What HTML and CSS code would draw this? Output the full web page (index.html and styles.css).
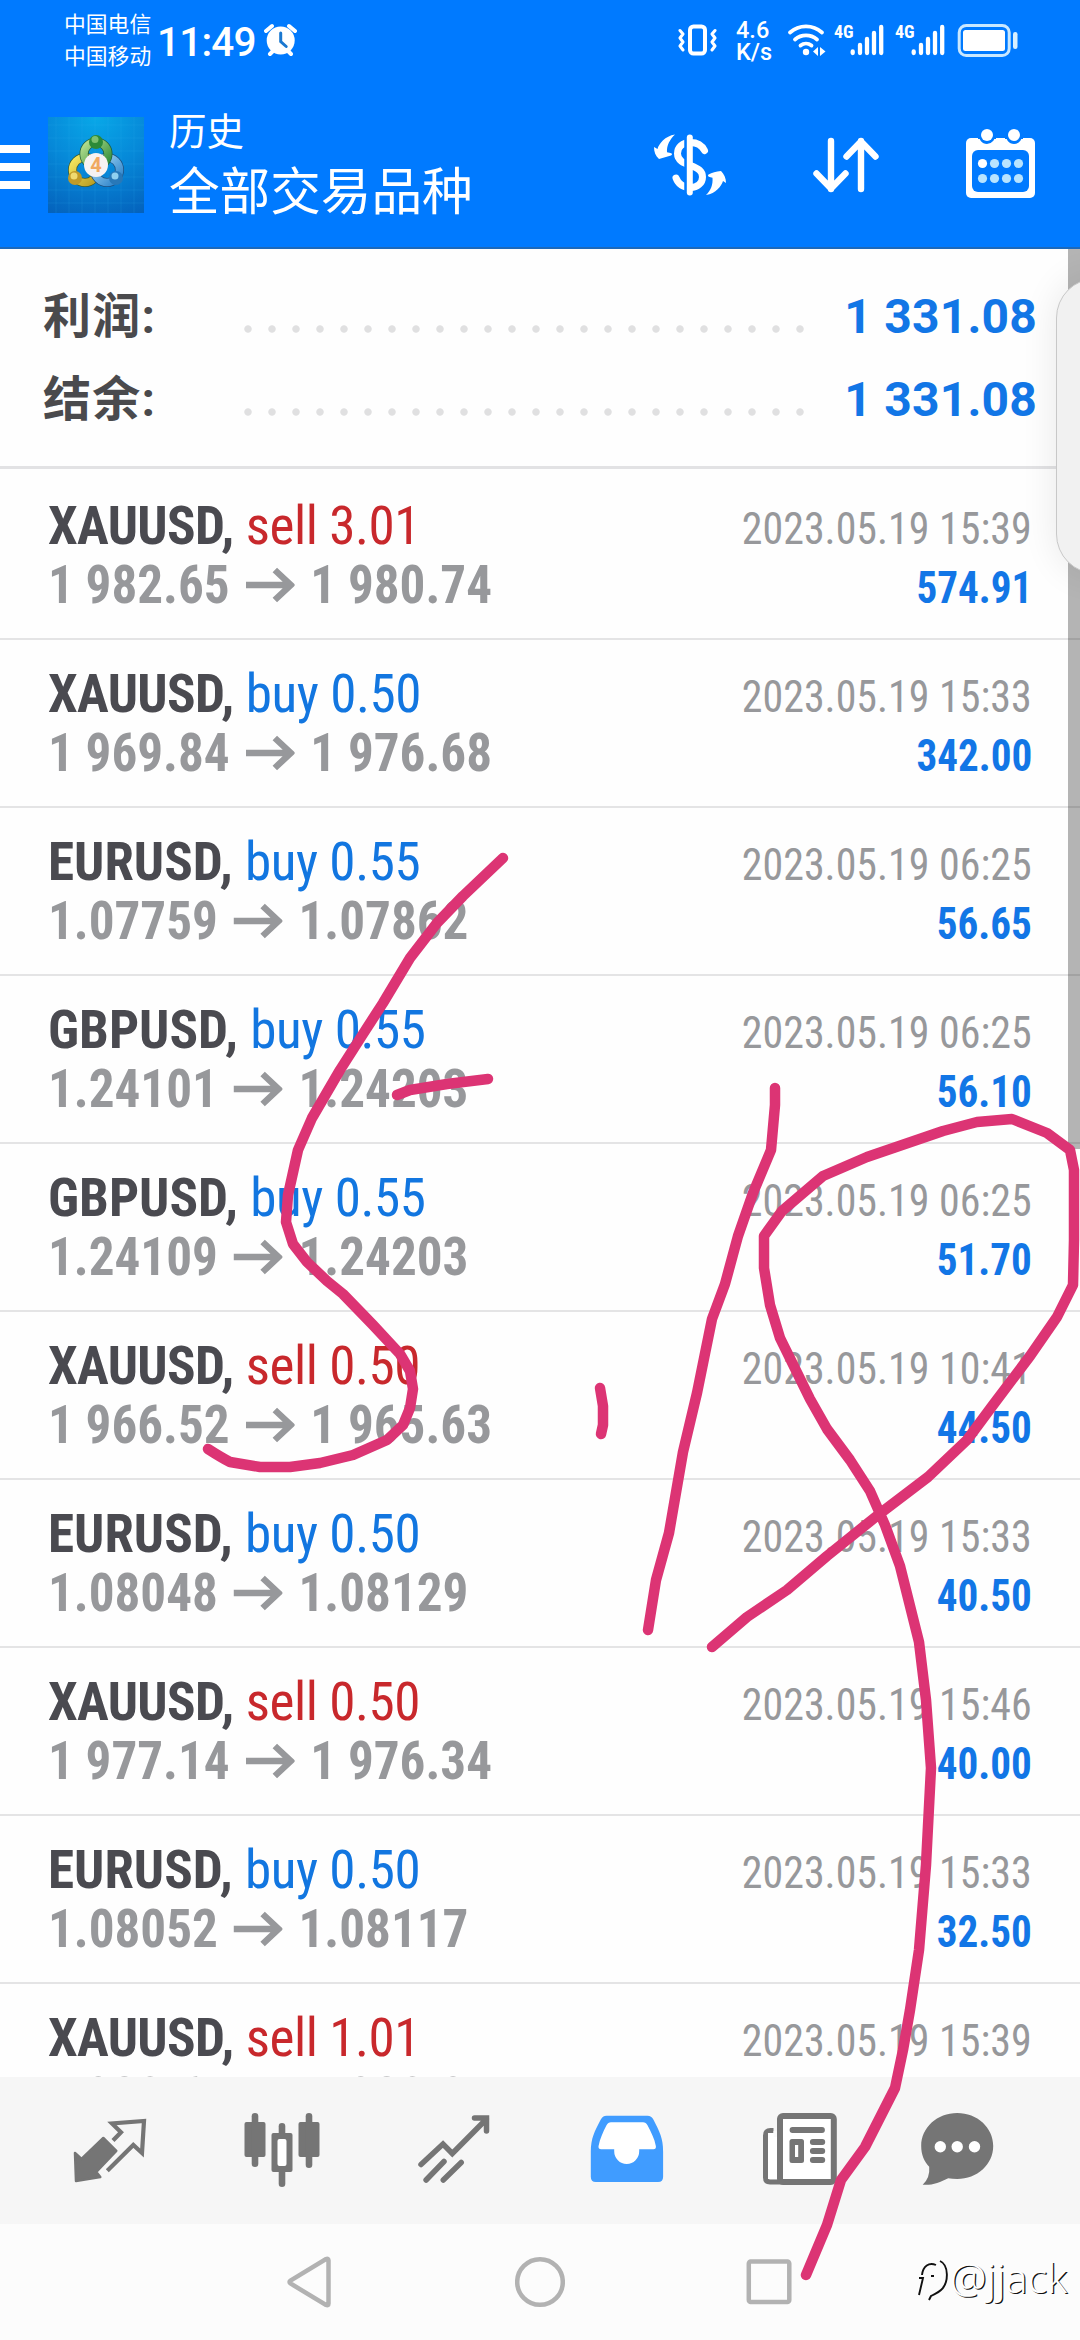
FILE: index.html
```html
<!DOCTYPE html>
<html lang="zh-CN">
<head>
<meta charset="utf-8">
<title>历史</title>
<link rel="stylesheet" href="styles.css">
</head>
<body>
<div class="screen">
  <header class="top">
    <div class="status">
      <div class="carriers"><span>中国电信</span><span>中国移动</span></div>
      <div class="clock">11:49</div>
      <svg class="alarm" width="34" height="34" viewBox="264 23 34 34">
        <path d="M266 31l6-5M295 31l-6-5M270 54l4-4M291 54l-4-4" stroke="#fff" stroke-width="4" stroke-linecap="round"/>
        <circle cx="280.700" cy="40.500" r="14" fill="#fff"/>
        <path d="M280.700 33v8.500l5.500 5" fill="none" stroke="#1a78d0" stroke-width="3" stroke-linecap="round"/>
      </svg>
      <svg class="vibrate" width="40" height="34" viewBox="677 23 40 34" fill="none" stroke="#fff" stroke-linecap="round" stroke-linejoin="round">
        <rect x="690" y="26.500" width="15" height="27" rx="3.500" stroke-width="4"/>
        <path d="M680 30.500l3 3.500-3 4 3 4-3 4 3 4M715 30.500l-3 3.500 3 4-3 4 3 4-3 4" stroke-width="3"/>
      </svg>
      <div class="speed"><span>4.6</span><span>K/s</span></div>
      <svg class="wifi" width="40" height="34" viewBox="787 23 40 34" fill="none" stroke="#fff" stroke-width="3.800" stroke-linecap="round">
        <path d="M790 32.500a24 24 0 0 1 32 0M795 39.500a17 17 0 0 1 22 0M800.500 45.500a9 9 0 0 1 11 0"/>
        <circle cx="806" cy="52" r="3.200" fill="#fff" stroke="none"/>
        <path d="M818 47v9l-5-4.500zM820 47v9l5.500-4.500z" fill="#fff" stroke="none"/>
      </svg>
      <div class="cell"><span>4G</span>
        <svg width="34" height="34" viewBox="850 23 34 34" stroke="#fff" stroke-width="4.300" stroke-linecap="round"><path d="M852.700 51.500v1.500M860 45v8M867 39v14M874 33v20M881.200 27v26"/></svg>
      </div>
      <div class="cell"><span>4G</span>
        <svg width="34" height="34" viewBox="850 23 34 34" stroke="#fff" stroke-width="4.300" stroke-linecap="round"><path d="M852.700 51.500v1.500M860 45v8M867 39v14M874 33v20M881.200 27v26"/></svg>
      </div>
      <svg class="battery" width="62" height="34" viewBox="956 23 62 34">
        <rect x="958.200" y="25.500" width="50" height="30" rx="7" fill="none" stroke="#c9e8ff" stroke-width="3"/>
        <rect x="962" y="30" width="42" height="21" rx="2.500" fill="#fff"/>
        <rect x="1012" y="32" width="4.500" height="17" rx="2.200" fill="#d8f0ff"/>
      </svg>
    </div>
    <div class="appbar">
      <div class="burger"><i></i><i></i><i></i></div>
      <svg class="logo" width="96" height="96" viewBox="0 0 96 96">
        <defs>
          <radialGradient id="bg" cx=".5" cy="0" r="1.100"><stop offset="0" stop-color="#08a8e8"/><stop offset=".5" stop-color="#0688d8"/><stop offset="1" stop-color="#0462bc"/></radialGradient>
          <linearGradient id="gg" x2="1" y2="1"><stop offset="0" stop-color="#b8e090"/><stop offset="1" stop-color="#2c8a38"/></linearGradient>
          <linearGradient id="gy" x2="1" y2="1"><stop offset="0" stop-color="#f5e860"/><stop offset="1" stop-color="#b89a20"/></linearGradient>
          <linearGradient id="gb" x2="1" y2="1"><stop offset="0" stop-color="#a8dcf8"/><stop offset="1" stop-color="#2a80c8"/></linearGradient>
        </defs>
        <rect width="96" height="96" fill="url(#bg)"/>
        <path d="M8 0v96M21 0v96M34 0v96M47 0v96M60 0v96M73 0v96M86 0v96M0 8h96M0 21h96M0 34h96M0 47h96M0 60h96M0 73h96M0 86h96" stroke="#39b4ee" stroke-opacity=".16"/>
        <circle cx="37" cy="53" r="12.500" fill="none" stroke="#3c5a30" stroke-width="9"/>
        <circle cx="37" cy="53" r="12.500" fill="none" stroke="url(#gy)" stroke-width="7.500"/>
        <circle cx="59" cy="53" r="12.500" fill="none" stroke="#1c5080" stroke-width="9"/>
        <circle cx="59" cy="53" r="12.500" fill="none" stroke="url(#gb)" stroke-width="7.500"/>
        <circle cx="48" cy="37" r="12" fill="none" stroke="#1f5c38" stroke-width="9"/>
        <circle cx="48" cy="37" r="12" fill="none" stroke="url(#gg)" stroke-width="7.500"/>
        <circle cx="48" cy="25" r="7" fill="#2c8a38"/><circle cx="47" cy="22.500" r="3.500" fill="#7cc070"/>
        <circle cx="27" cy="61" r="7" fill="#c09a28"/><circle cx="26" cy="59" r="3.500" fill="#f0da70"/>
        <circle cx="68" cy="61" r="7" fill="#2878b8"/><circle cx="67" cy="59" r="3.500" fill="#90d0f0"/>
        <circle cx="48" cy="48" r="12" fill="#f6f2f2"/>
        <text x="48" y="55" text-anchor="middle" class="logo-num">4</text>
      </svg>
      <div class="titles"><span class="t1">历史</span><span class="t2">全部交易品种</span></div>
      <svg class="act dollar" width="80" height="80" viewBox="650 125 80 80">
        <path d="M703.500 150.500c-3-6-9-8-14-8-8 0-13 4.500-13 11 0 7 6 9.500 13 12 8 3 12 5.500 12 11.500 0 6-5 10.500-12 10.500-7 0-12-3-14.500-9.500" transform="translate(1 0)" fill="none" stroke="#fff" stroke-width="7" stroke-linecap="round"/>
        <path d="M686 138v54" stroke="#007aff" stroke-width="3.500"/>
        <path d="M689.800 137.500v55" stroke="#fff" stroke-width="6" stroke-linecap="round"/>
        <path d="M675 134.500c-10 1.500-16 9-17.500 14.500l-3.500-2c0 5 1.500 9 5 12l12-3.500c1.500-1 1.500-2-.500-2.500l-3.500-.700c-.500-7 3-13 8-17.800zM706 195c10-1.500 15.500-9 17-14l3 2c0-5-2-9-5-12-5 .500-9 1.500-12.500 3.500-1 1-.500 2 1 2.500l3 .700c.5 7-1.500 12.500-6.500 17.300z" fill="#fff"/>
      </svg>
      <svg class="act sort" width="72" height="72" viewBox="810 129 72 72" fill="none" stroke="#fff" stroke-width="6.400" stroke-linecap="round" stroke-linejoin="round">
        <path d="M831 141v48M816.500 173.500L831 188.500l14.500-15M861 189v-48M846.500 156.500L861 141.500l14.500 15"/>
      </svg>
      <svg class="act cal" width="70" height="74" viewBox="966 127 70 74">
        <rect x="966" y="138" width="69" height="60" rx="5" fill="#fff"/>
        <rect x="972" y="150" width="57" height="42" rx="6" fill="#007aff"/>
        <path d="M978 133a9 11 0 0 0 18 0zM1005 133a9 11 0 0 0 18 0z" fill="#007aff"/>
        <path d="M978 133h18v6h-18zM1005 133h18v6h-18z" fill="#007aff"/>
        <circle cx="987" cy="135" r="6" fill="#fff"/><circle cx="1014" cy="135" r="6" fill="#fff"/>
        <circle cx="982.500" cy="163.500" r="4.600" fill="#fff"/>
        <g fill="#b8e4ff"><circle cx="994.500" cy="163.500" r="4.600"/><circle cx="1006.500" cy="163.500" r="4.600"/><circle cx="1018.500" cy="163.500" r="4.600"/><circle cx="982.500" cy="178.500" r="4.600"/><circle cx="994.500" cy="178.500" r="4.600"/><circle cx="1006.500" cy="178.500" r="4.600"/><circle cx="1018.500" cy="178.500" r="4.600"/></g>
      </svg>
    </div>
  </header>

  <main class="list">
    <section class="summary">
      <div class="sum"><b>利润:</b><i class="dots"></i><strong>1 331.08</strong></div>
      <div class="sum"><b>结余:</b><i class="dots"></i><strong>1 331.08</strong></div>
    </section>
    <article class="deal"><div class="l"><p class="sym"><b class="xau">XAUUSD,</b> <span class="sell">sell 3.01</span></p><p class="px">1 982.65<svg class="arr" viewBox="0 0 50 36" preserveAspectRatio="none"><path d="M1 18h43M30 3l16 15-16 15"/></svg>1 980.74</p></div><div class="r"><time>2023.05.19 15:39</time><strong>574.91</strong></div></article>
    <article class="deal"><div class="l"><p class="sym"><b class="xau">XAUUSD,</b> <span class="buy">buy 0.50</span></p><p class="px">1 969.84<svg class="arr" viewBox="0 0 50 36" preserveAspectRatio="none"><path d="M1 18h43M30 3l16 15-16 15"/></svg>1 976.68</p></div><div class="r"><time>2023.05.19 15:33</time><strong>342.00</strong></div></article>
    <article class="deal"><div class="l"><p class="sym"><b>EURUSD,</b> <span class="buy">buy 0.55</span></p><p class="px">1.07759<svg class="arr" viewBox="0 0 50 36" preserveAspectRatio="none"><path d="M1 18h43M30 3l16 15-16 15"/></svg>1.07862</p></div><div class="r"><time>2023.05.19 06:25</time><strong>56.65</strong></div></article>
    <article class="deal"><div class="l"><p class="sym"><b>GBPUSD,</b> <span class="buy">buy 0.55</span></p><p class="px">1.24101<svg class="arr" viewBox="0 0 50 36" preserveAspectRatio="none"><path d="M1 18h43M30 3l16 15-16 15"/></svg>1.24203</p></div><div class="r"><time>2023.05.19 06:25</time><strong>56.10</strong></div></article>
    <article class="deal"><div class="l"><p class="sym"><b>GBPUSD,</b> <span class="buy">buy 0.55</span></p><p class="px">1.24109<svg class="arr" viewBox="0 0 50 36" preserveAspectRatio="none"><path d="M1 18h43M30 3l16 15-16 15"/></svg>1.24203</p></div><div class="r"><time>2023.05.19 06:25</time><strong>51.70</strong></div></article>
    <article class="deal"><div class="l"><p class="sym"><b class="xau">XAUUSD,</b> <span class="sell">sell 0.50</span></p><p class="px">1 966.52<svg class="arr" viewBox="0 0 50 36" preserveAspectRatio="none"><path d="M1 18h43M30 3l16 15-16 15"/></svg>1 965.63</p></div><div class="r"><time>2023.05.19 10:41</time><strong>44.50</strong></div></article>
    <article class="deal"><div class="l"><p class="sym"><b>EURUSD,</b> <span class="buy">buy 0.50</span></p><p class="px">1.08048<svg class="arr" viewBox="0 0 50 36" preserveAspectRatio="none"><path d="M1 18h43M30 3l16 15-16 15"/></svg>1.08129</p></div><div class="r"><time>2023.05.19 15:33</time><strong>40.50</strong></div></article>
    <article class="deal"><div class="l"><p class="sym"><b class="xau">XAUUSD,</b> <span class="sell">sell 0.50</span></p><p class="px">1 977.14<svg class="arr" viewBox="0 0 50 36" preserveAspectRatio="none"><path d="M1 18h43M30 3l16 15-16 15"/></svg>1 976.34</p></div><div class="r"><time>2023.05.19 15:46</time><strong>40.00</strong></div></article>
    <article class="deal"><div class="l"><p class="sym"><b>EURUSD,</b> <span class="buy">buy 0.50</span></p><p class="px">1.08052<svg class="arr" viewBox="0 0 50 36" preserveAspectRatio="none"><path d="M1 18h43M30 3l16 15-16 15"/></svg>1.08117</p></div><div class="r"><time>2023.05.19 15:33</time><strong>32.50</strong></div></article>
    <article class="deal"><div class="l"><p class="sym"><b class="xau">XAUUSD,</b> <span class="sell">sell 1.01</span></p><p class="px">1 980.64<svg class="arr" viewBox="0 0 50 36" preserveAspectRatio="none"><path d="M1 18h43M30 3l16 15-16 15"/></svg>1 980.97</p></div><div class="r"><time>2023.05.19 15:39</time></div></article>
    <div class="scrollbar"></div>
  </main>

  <nav class="tabs">
    <svg width="80" height="86" viewBox="69 30 80 86">
      <path d="M75 76l6.500 6L103.300 61l13 13-20 21 4 5L76 104z" fill="#757575" stroke="#757575" stroke-width="2.500" stroke-linejoin="round"/>
      <path d="M113 63.500l8-8.200-9-8.800 32-2.500-2 32-8.700-8-26 25.700" fill="none" stroke="#757575" stroke-width="4.200"/>
    </svg>
    <svg width="80" height="86" viewBox="241.500 30 80 86" fill="#757575">
      <rect x="244" y="45" width="21" height="35" rx="2"/><rect x="251.200" y="36" width="6.600" height="54" rx="3.300"/>
      <rect x="298" y="45" width="21" height="35" rx="2"/><rect x="305.200" y="36" width="6.600" height="55" rx="3.300"/>
      <rect x="278.200" y="46" width="6.600" height="64" rx="3.300"/><rect x="271" y="56" width="21" height="39" rx="2"/><rect x="277" y="62" width="9" height="27" rx="2" fill="#fff"/>
    </svg>
    <svg width="80" height="86" viewBox="413.500 30 80 86" fill="none" stroke="#757575" stroke-width="5.500" stroke-linecap="round">
      <path d="M420.500 87.500l22-20.500 9.300 9.500L486 42M474 41h12v13M443.500 84.500L425.600 103M460.700 85.500L442.800 103"/>
    </svg>
    <svg width="80" height="86" viewBox="586.500 30 80 86">
      <path d="M606 38.700h41q4 0 6 4c6 12 9.600 18 9.600 32v25q0 5.300-5 5.300h-62.300q-5 0-5-5.300V75c0-14 4-21 9.700-32q2-4.300 6-4.300z" fill="#409cff"/>
      <path d="M610.500 45.300h32q3 0 4.500 3c3.500 7 7 13 8.400 21q.3 3-2.400 3h-14.300v2a12.500 12.700 0 0 1-25 0v-2h-13q-3 0-2.700-3c1.500-8 4.500-14 8-21q1.500-3 4.500-3z" fill="#fff"/>
    </svg>
    <svg width="80" height="86" viewBox="759.500 30 80 86">
      <path d="M774 53.500h-3q-5 0-5 5v42q0 4.500 4.500 4.500H785" fill="none" stroke="#757575" stroke-width="5"/>
      <path d="M768.500 56h9v46h-9z" fill="#fff"/><path d="M774 54h4v6h-4z" fill="#fafafa"/>
      <rect x="780.500" y="39" width="53.800" height="66" rx="3" fill="#fff" stroke="#757575" stroke-width="6"/>
      <path d="M793 53h29.500M813.300 65h9.500M813.300 74h9.500M813.300 83h9.500" stroke="#757575" stroke-width="5.800" stroke-linecap="round"/>
      <rect x="790" y="62" width="14.500" height="24" rx="2.500" fill="#757575"/><rect x="795.500" y="68" width="3.200" height="12" fill="#fff"/>
    </svg>
    <svg class="chat" width="80" height="86" viewBox="917.500 30 80 86">
      <path d="M957.700 36c20 0 36 14.500 36 33s-16 33-36 33q-5 0-9-.8c-8 4-17 7.500-25.500 6.500q7.500-7 6.500-18c-5-5-8-12-8-20.700 0-18.500 16-33 36-33z" fill="#757575"/>
      <g fill="#fff"><circle cx="940.800" cy="69.700" r="5.700"/><circle cx="957.700" cy="69.700" r="5.700"/><circle cx="975" cy="69.700" r="5.700"/></g>
    </svg>
  </nav>

  <footer class="sysnav">
    <svg width="50" height="60" viewBox="0 0 50 60"><path d="M4.500 28.500q-2 1.500 0 3l35.500 21.500q2.500 1 2.500-1.500V8.500q0-2.500-2.500-1.500z"/></svg>
    <svg width="50" height="60" viewBox="0 0 50 60"><circle cx="25" cy="30" r="22.800"/></svg>
    <svg width="50" height="60" viewBox="0 0 50 60"><rect x="4.800" y="9.500" width="40.500" height="40.500" rx="2"/></svg>
  </footer>

  <div class="edge"></div>
  <div class="mark">
    <svg width="36" height="44" viewBox="915 2260 36 44" fill="none"><path d="M919 2281h4l-4 17M922 2278c1-9 7-13 14-10M931 2279h3M940 2264c9 4 9 22 1 29-3 3-7 4-10 6l-2 4" stroke="#111" stroke-width="1.900"/></svg><span>@jjack</span>
  </div>
  <svg class="ink" width="1080" height="2340" viewBox="0 0 1080 2340" fill="none" stroke="#dc3474" stroke-width="10.500" stroke-linecap="round" stroke-linejoin="round">
    <path d="M503 858L463 896L437 923L410 958L383 1003L363 1034L340 1070L312 1118L298 1150L288 1195L286 1222L293 1244L307 1262L327 1281L343 1294L373 1325L400 1354L410 1371L413 1389L410 1408L403 1425L387 1440L353 1455L320 1463L290 1467L260 1467L230 1462Q222 1458 208 1449"/>
    <path d="M397 1095L410 1090L447 1084L488 1079"/>
    <path d="M775 1088V1105L771 1150L753 1193L738 1236L725 1284L712 1319L697 1393L683 1452L669 1533L656 1580L648 1630"/>
    <path d="M600 1388L603 1406V1425L601 1434"/>
    <path d="M712 1647L747 1617L787 1590L827 1556L878 1515L928 1477L967 1440L993 1405L1030 1356L1057 1317L1073 1285L1074 1240V1170L1070 1150L1047 1133L1012 1119L977 1122L943 1131L867 1157L823 1176L782 1211L764 1236V1268L770 1305L780 1338L810 1399L827 1429L850 1460L870 1491L885 1525L900 1566L919 1642L926 1700L931 1768L926 1865L919 1950L910 2010L903 2050L895 2088L865 2147L841 2180L827 2225L806 2275"/>
  </svg>
</div>
</body>
</html>
```
FILE: styles.css
```css
* { box-sizing: border-box; }
body { margin: 0; background: #fff; font-family: Roboto, "Noto Sans CJK SC", sans-serif; }
p { margin: 0; }
svg { display: block; flex: none; }
.screen { position: relative; width: 1080px; height: 2340px; overflow: hidden; display: flex; flex-direction: column; background: #fefefe; }

.top { height: 249px; flex: none; background: #007aff; border-bottom: 2px solid #1c69bb; color: #fff; }
.status { height: 80px; display: flex; align-items: center; padding-left: 64px; }
.carriers { display: flex; flex-direction: column; width: 93px; font-size: 21.800px; line-height: 32px; padding-top: 1px; }
.clock { width: 106px; font-size: 40.500px; line-height: 48px; padding-top: 4px; font-weight: 500; letter-spacing: -.8px; }
.alarm { margin-left: 1px; }
.vibrate { margin-left: 379px; }
.speed { display: flex; flex-direction: column; width: 51px; margin-left: 19px; font-size: 23.500px; font-weight: 500; line-height: 21.500px; padding-top: 3px; }
.cell { position: relative; width: 61px; height: 34px; padding-left: 23px; }
.cell span { position: absolute; left: 7px; top: 0; font: 700 18px/18px "Roboto Condensed", Roboto, sans-serif; }
.battery { margin-left: 8px; }

.appbar { height: 167px; display: flex; align-items: flex-start; padding-top: 37px; }
.burger { width: 30px; margin: 28px 18px 0 0; display: flex; flex-direction: column; gap: 10px; }
.burger i { height: 8px; background: #fff; }
.logo-num { font: 700 20px Roboto, sans-serif; fill: #f0a860; }
.titles { width: 401px; margin: -8px 0 0 25px; display: flex; flex-direction: column; white-space: nowrap; }
.t1 { font-size: 37.500px; line-height: 46px; }
.t2 { font-size: 50.600px; line-height: 76px; }
.act { margin-top: 12px; }
.dollar { margin: 8px 0 0 80px; }
.sort { margin-left: 80px; }
.cal { margin: 10px 0 0 84px; }

.list { position: relative; height: 1828px; flex: none; overflow: hidden; }
.summary { height: 220px; padding: 26px 43px 0 43px; border-bottom: 3px solid #e2e2e4; }
.sum { height: 83px; display: flex; align-items: center; }
.sum b { width: 193px; font-size: 48px; line-height: 83px; letter-spacing: 1.300px; color: #4a4a4d; }
.dots { width: 576px; height: 8px; margin-top: 24px; background: radial-gradient(circle at 12px 4px, #e0e0e1 3.300px, transparent 4.100px) 0 0 / 24px 8px; }
.sum strong { flex: 1; text-align: right; font-size: 48px; letter-spacing: .2px; color: #1276e6; white-space: nowrap; }

.deal { height: 168px; display: flex; justify-content: space-between; padding: 24px 48px 0; border-bottom: 2px solid #e4e4e5; font-family: "Roboto Condensed", Roboto, sans-serif; white-space: nowrap; }
.deal:nth-of-type(1) { height: 171px; padding-top: 27px; }
.r { display: flex; flex-direction: column; align-items: flex-end; padding-top: 4px; }
.sym, .px { font-size: 54.500px; line-height: 59px; height: 59px; transform-origin: left; }
.sym { transform: scaleX(.975); color: #4a4a50; }
.px { transform: scaleX(.938); color: #97989b; font-weight: 700; display: flex; align-items: center; }
.xau { letter-spacing: -.7px; }
.sym span { letter-spacing: -.45px; margin-left: 0; }
.arr { width: 53px; height: 36px; margin: 0 17px 0 16px; fill: none; stroke: #97989b; stroke-width: 6.500; }
.r time, .r strong { height: 59px; font-size: 44.500px; line-height: 59px; transform-origin: right; }
.r time { transform: scaleX(.942); color: #97989b; }
.r strong { transform: scaleX(.925); color: #1276e6; }
.sell { color: #c8282c; }
.buy { color: #1276e0; }
.scrollbar { position: absolute; right: 0; top: 0; width: 12px; height: 900px; background: rgba(0,0,0,.29); }

.tabs { height: 147px; flex: none; background: #f6f6f6; display: flex; gap: 92.500px; padding: 30px 0 0 69px; }
.chat { margin-left: -15px; }
.sysnav { height: 116px; flex: none; background: #fcfcfc; display: flex; gap: 179px; padding: 28px 0 0 286px; }
.sysnav svg { fill: none; stroke: #b2b2b2; stroke-width: 4.500; }

.edge { position: absolute; left: 1056px; top: 278px; width: 80px; height: 296px; border: 1.500px solid #c8c8c8; border-radius: 46px; background: #f1f1f1; box-shadow: 0 0 36px rgba(0,0,0,.09); }
.mark { position: absolute; left: 915px; top: 2257px; display: flex; align-items: flex-start; color: #fff; }
.mark span { font: 300 41px/46px "Noto Sans", sans-serif; margin: -3px 0 0 -1px; text-shadow: 1.300px 1px 0 #111; }
.ink { position: absolute; left: 0; top: 0; }
```
